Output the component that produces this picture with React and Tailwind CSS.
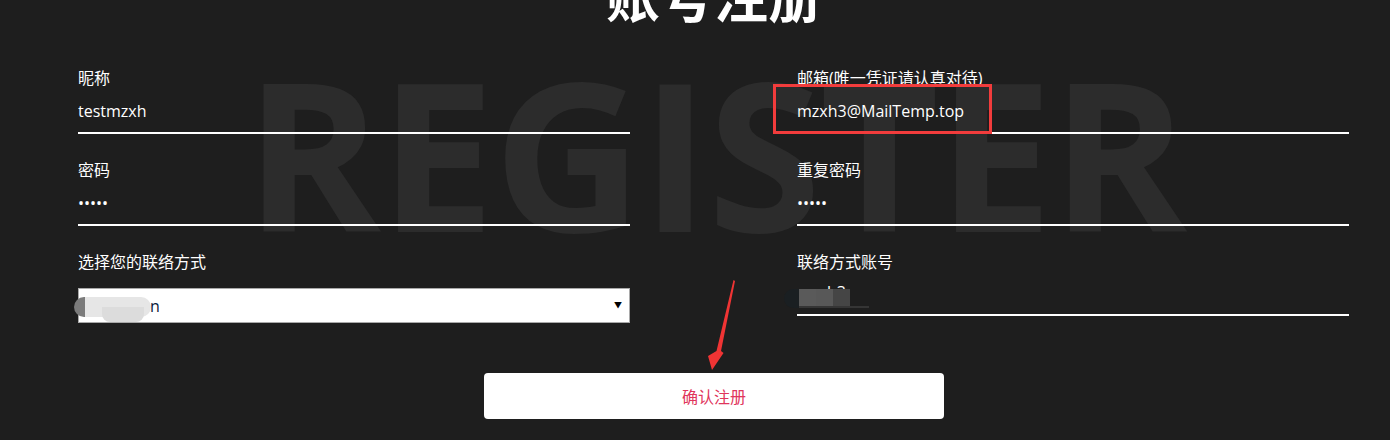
import { useState } from 'react';

const FONT = "font-['Open_Sans','Noto_Sans_CJK_SC',sans-serif]";

const Field = ({ label, children, className = '' }) => (
  <div className={`relative flex flex-col ${className}`}>
    <label className="h-[24px] text-[16px] leading-[24px] text-white">{label}</label>
    {children}
  </div>
);

const LineInput = ({ type = 'text', value, onChange }) => (
  <input
    type={type}
    value={value}
    onChange={(e) => onChange(e.target.value)}
    className={`h-[44px] w-full border-b-2 border-white bg-transparent text-[16px] text-white outline-none ${FONT}`}
  />
);

const App = () => {
  const [form, setForm] = useState({
    nickname: 'testmzxh',
    email: 'mzxh3@MailTemp.top',
    password: '12345',
    repeat: '12345',
  });
  const set = (key) => (v) => setForm((f) => ({ ...f, [key]: v }));

  return (
    <div className={`relative min-h-screen w-full overflow-hidden bg-[#1e1e1e] ${FONT}`}>
      <div className="relative ml-[78px] w-[1272px]">
        {/* watermark */}
        <div
          aria-hidden
          className="pointer-events-none absolute left-[167px] top-[81px] select-none font-['Open_Sans',sans-serif] text-[206px] font-bold leading-none tracking-[-1.5px] text-[#2c2c2c]"
        >
          REGISTER
        </div>

        <h1 className="relative mt-[-32px] h-[54px] text-center font-['Noto_Sans_CJK_SC',sans-serif] text-[54px] font-bold leading-none text-white">
          账号注册
        </h1>

        <div className="relative mt-[44px] grid grid-cols-[552px_552px] gap-x-[167px] gap-y-[24px]">
          <Field label="昵称">
            <LineInput value={form.nickname} onChange={set('nickname')} />
          </Field>
          <Field label="邮箱(唯一凭证请认真对待)">
            <LineInput value={form.email} onChange={set('email')} />
            <div className="pointer-events-none absolute left-[-24px] top-[18px] h-[50px] w-[219px] border-[3px] border-[#f23c3c]" />
          </Field>
          <Field label="密码">
            <LineInput type="password" value={form.password} onChange={set('password')} />
          </Field>
          <Field label="重复密码">
            <LineInput type="password" value={form.repeat} onChange={set('repeat')} />
          </Field>
          <Field label="选择您的联络方式">
            <div className="relative mt-[14px] h-[35px] w-full border border-[#a9a9a9] bg-white">
              <div className="absolute left-[-5px] top-[8px] h-[20px] w-[12px] rounded-l-full bg-[#7b7b7b]" />
              <div className="absolute left-[6px] top-[8px] h-[20px] w-[66px] rounded-r-[10px] bg-[#e6e6e6]" />
              <div className="absolute left-[23px] top-[18px] h-[15px] w-[42px] rounded-b-[8px] bg-[#dcdcdc]" />
              <span className="absolute left-[71px] top-[7px] text-[16px] leading-[20px] text-[#0b1a3a]">n</span>
              <span className="absolute right-[7px] top-[11px] text-[8px] leading-[10px] text-black">▼</span>
            </div>
          </Field>
          <Field label="联络方式账号">
            <div className="relative h-[42px] w-full border-b-2 border-white">
              <span className="absolute left-[30px] top-[8px] text-[16px] leading-[20px] text-white">h3</span>
              <div className="absolute left-[-13px] top-[15px] h-[19px] w-[16px] rounded-l-full bg-[#1a1f22]" />
              <div className="absolute left-[2px] top-[15px] h-[17px] w-[17px] bg-[#5a5a5a]" />
              <div className="absolute left-[19px] top-[15px] h-[17px] w-[17px] bg-[#585858]" />
              <div className="absolute left-[36px] top-[15px] h-[17px] w-[17px] bg-[#454545]" />
              <div className="absolute left-[2px] top-[32px] h-[2px] w-[70px] bg-[#353535]" />
            </div>
          </Field>
        </div>

        <div className="relative mt-[50px] flex justify-center">
          <button
            type="button"
            className="h-[46px] w-[460px] rounded-[4px] bg-white font-['Noto_Sans_CJK_SC',sans-serif] text-[16px] text-[#e0355c]"
          >
            确认注册
          </button>
        </div>
      </div>

      {/* annotation arrow */}
      <svg className="pointer-events-none absolute left-0 top-0" width="1390" height="440" viewBox="0 0 1390 440">
        <polygon
          points="733.5,280 735,281 721,351 723.5,353 712,370 708,356 716.5,351"
          fill="#f03434"
        />
      </svg>
    </div>
  );
};

export default App;
